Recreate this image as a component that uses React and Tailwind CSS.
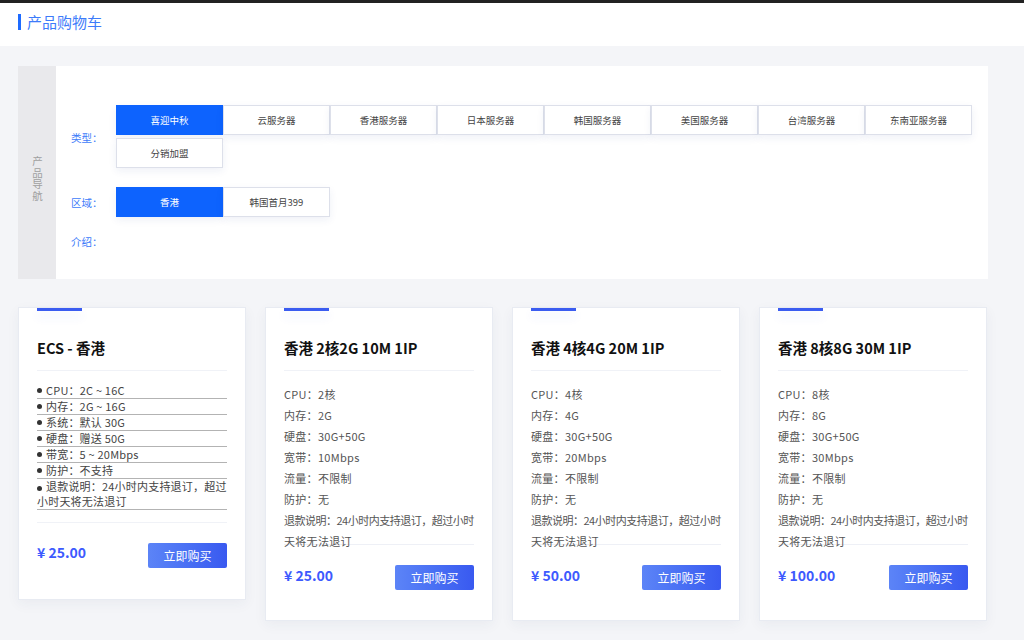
import React from "react";

const types = ["喜迎中秋", "云服务器", "香港服务器", "日本服务器", "韩国服务器", "美国服务器", "台湾服务器", "东南亚服务器", "分销加盟"];
const regions = ["香港", "韩国首月399"];

function OptBtn({ label, active }) {
  return (
    <div
      className={
        "w-[107px] h-[30px] flex items-center justify-center text-[9.5px] border shadow-[0_3px_8px_rgba(30,60,140,0.07)] " +
        (active ? "bg-[#0d63fe] border-[#0d63fe] text-white" : "bg-white border-[#dde0ea] text-[#444]")
      }
    >
      {label}
    </div>
  );
}

function BuyBtn() {
  return (
    <div className="w-[79px] h-[25px] rounded-[2px] bg-gradient-to-r from-[#5c84f7] to-[#3959f0] text-white text-[12px] flex items-center justify-center">
      立即购买
    </div>
  );
}

function CardHead({ title }) {
  return (
    <>
      <div className="w-[45px] h-[3px] bg-[#3b5cf0] shadow-[0_6px_10px_rgba(59,92,240,0.10)]" />
      <div className="mt-[26px] text-[14.5px] leading-[22px] font-bold text-[#111]">{title}</div>
      <div className="mt-[11px] h-px bg-[#f0f2f7]" />
    </>
  );
}

function EcsCard() {
  const items = ["CPU：2C ~ 16C", "内存：2G ~ 16G", "系统：默认 30G", "硬盘：赠送 50G", "带宽：5 ~ 20Mbps", "防护：不支持"];
  return (
    <div className="bg-white border border-[#e8ebf2] shadow-[0_4px_12px_rgba(30,50,100,0.05)] px-[18px] pb-[31px] self-start">
      <CardHead title="ECS - 香港" />
      <div className="mt-[12px] text-[11px] text-[#444] tracking-[0.2px]">
        {items.map((t) => (
          <div key={t} className="leading-[15px] border-b border-[#b3b3b3] flex items-center">
            <span className="inline-block w-[5px] h-[5px] rounded-full bg-[#333] mr-[4px]" />
            {t}
          </div>
        ))}
        <div className="leading-[15px] border-b border-[#b3b3b3]">
          <span className="inline-block w-[5px] h-[5px] rounded-full bg-[#333] mr-[4px] align-middle" />
          退款说明：24小时内支持退订，超过
          <br />
          小时天将无法退订
        </div>
      </div>
      <div className="mt-[12px] h-px bg-[#f0f2f7]" />
      <div className="mt-[20px] flex items-start justify-between">
        <div className="text-[14px] font-bold text-[#3d5afe] leading-[20px] mt-[-1px]">¥ 25.00</div>
        <BuyBtn />
      </div>
    </div>
  );
}

function SpecCard({ title, cpu, mem, bw, price }) {
  const items = [`CPU：${cpu}`, `内存：${mem}`, "硬盘：30G+50G", `宽带：${bw}`, "流量：不限制", "防护：无"];
  return (
    <div className="bg-white border border-[#e8ebf2] shadow-[0_4px_12px_rgba(30,50,100,0.05)] px-[18px] pb-[30px] self-start">
      <CardHead title={title} />
      <div className="mt-[13px] h-[161px] border-b border-[#eef0f6] text-[11px] leading-[21px] text-[#555] tracking-[0.3px]">
        {items.map((t) => (
          <div key={t}>{t}</div>
        ))}
        <div className="whitespace-nowrap tracking-[-0.5px]">退款说明：24小时内支持退订，超过小时</div>
        <div>天将无法退订</div>
      </div>
      <div className="mt-[20px] flex items-start justify-between">
        <div className="text-[14px] font-bold text-[#3d5afe] leading-[20px]">¥ {price}</div>
        <BuyBtn />
      </div>
    </div>
  );
}

export default function App() {
  return (
    <div className="w-[1024px] min-h-[640px] bg-[#f4f5f8] font-['Noto_Sans_CJK_SC','Noto_Sans',sans-serif]">
      <div className="h-[3px] bg-[#222]" />
      <div className="h-[43px] bg-white flex items-start pt-[11px] pl-[18px]">
        <div className="w-[3px] h-[16px] bg-[#1e6bff] mr-[6px]" />
        <div className="text-[15px] text-[#3d7bfa] leading-[16px]">产品购物车</div>
      </div>

      <div className="mt-[20px] ml-[18px] w-[970px] h-[213px] flex bg-white">
        <div className="w-[38px] bg-[#e9e9ec] flex items-center justify-center pt-[12px]">
          <span className="[writing-mode:vertical-rl] text-[10.5px] tracking-[1px] text-[#a0a0a0]">产品导航</span>
        </div>
        <div className="flex-1 pl-[15px] pt-[39px]">
          <div className="flex items-center">
            <div className="w-[45px] text-[10.5px] text-[#3d7bfa] pt-[3px]">类型：</div>
            <div className="w-[856px] flex flex-wrap gap-y-[3px]">
              {types.map((t, i) => (
                <OptBtn key={t} label={t} active={i === 0} />
              ))}
            </div>
          </div>
          <div className="mt-[19px] flex items-center">
            <div className="w-[45px] text-[10.5px] text-[#3d7bfa] pt-[1px]">区域：</div>
            <div className="flex">
              {regions.map((t, i) => (
                <OptBtn key={t} label={t} active={i === 0} />
              ))}
            </div>
          </div>
          <div className="mt-[17px] h-[16px] flex items-center text-[10.5px] text-[#3d7bfa]">介绍：</div>
        </div>
      </div>

      <div className="mt-[28px] ml-[18px] w-[969px] grid grid-cols-4 gap-x-[19px] items-start pb-[18px]">
        <EcsCard />
        <SpecCard title="香港 2核2G 10M 1IP" cpu="2核" mem="2G" bw="10Mbps" price="25.00" />
        <SpecCard title="香港 4核4G 20M 1IP" cpu="4核" mem="4G" bw="20Mbps" price="50.00" />
        <SpecCard title="香港 8核8G 30M 1IP" cpu="8核" mem="8G" bw="30Mbps" price="100.00" />
      </div>
    </div>
  );
}
